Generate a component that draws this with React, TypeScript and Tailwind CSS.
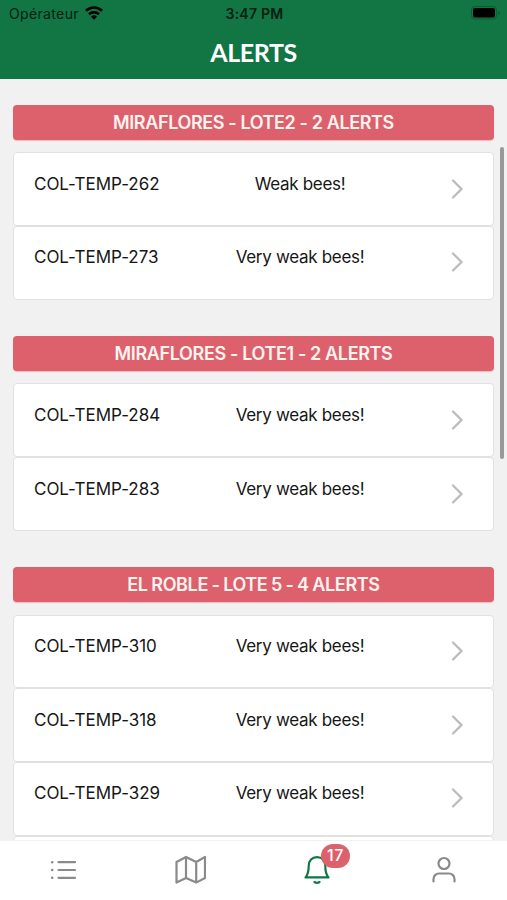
import React from 'react';

type Alert = {
  id: string;
  message: string;
};

type AlertGroup = {
  title: string;
  titleClass: string;
  alerts: Alert[];
  hasMore?: boolean;
};

const groups: AlertGroup[] = [
  {
    title: 'MIRAFLORES - LOTE2 - 2 ALERTS',
    titleClass: 'tracking-[-0.38px]',
    alerts: [
      { id: 'COL-TEMP-262', message: 'Weak bees!' },
      { id: 'COL-TEMP-273', message: 'Very weak bees!' },
    ],
  },
  {
    title: 'MIRAFLORES - LOTE1 - 2 ALERTS',
    titleClass: 'tracking-[-0.36px]',
    alerts: [
      { id: 'COL-TEMP-284', message: 'Very weak bees!' },
      { id: 'COL-TEMP-283', message: 'Very weak bees!' },
    ],
  },
  {
    title: 'EL ROBLE - LOTE 5 - 4 ALERTS',
    titleClass: 'tracking-[-0.36px] [word-spacing:-0.6px]',
    alerts: [
      { id: 'COL-TEMP-310', message: 'Very weak bees!' },
      { id: 'COL-TEMP-318', message: 'Very weak bees!' },
      { id: 'COL-TEMP-329', message: 'Very weak bees!' },
    ],
    hasMore: true,
  },
];

const StatusBar = () => (
  <div className="grid h-[27px] grid-cols-3 items-center pl-[9px] pr-[7px] text-[14px] text-[#04200f]">
    <div className="flex items-center gap-[6px]">
      <span className="tracking-[0.35px]">Opérateur</span>
      <svg className="-mt-px" width="18" height="14" viewBox="0 0 18 14" fill="none" stroke="#000" strokeWidth="2.6">
        <path d="M1 4.7a11.5 11.5 0 0 1 16 0" />
        <path d="M4 8.2a7.2 7.2 0 0 1 10 0" />
        <path d="M9 13.8 6 10.7a4.3 4.3 0 0 1 6 0z" fill="#000" stroke="none" />
      </svg>
    </div>
    <span className="text-center text-[14px] font-semibold tracking-[0.25px]">3:47 PM</span>
    <svg className="-mt-px justify-self-end" width="29" height="14" viewBox="0 0 29 14">
      <rect x="0.5" y="0.5" width="25" height="12.5" rx="3.5" fill="none" stroke="#0b5b34" />
      <rect x="2" y="2" width="22" height="9.5" rx="2" fill="#000" />
      <path d="M27.3 5v4c1-.5 1.3-1 1.3-2s-.3-1.5-1.3-2z" fill="#0b5b34" />
    </svg>
  </div>
);

const AlertRow = ({ alert }: { alert: Alert }) => (
  <div className="flex h-[73.7px] shrink-0 rounded-[4px] border border-[#e1e1e1] bg-white pl-[20px] pt-[19.4px] text-[17px] leading-[22px] text-[#161616]">
    <span className="w-[186px] tracking-[-0.03px]">{alert.id}</span>
    <span className="w-[160px] text-center tracking-[-0.3px]">{alert.message}</span>
    <svg className="ml-[71px] mt-[5px]" width="13" height="22" viewBox="0 0 13 22" fill="none" stroke="#bcbcbc" strokeWidth="2.3" strokeLinecap="round">
      <path d="M2 2.5 10.5 11 2 19.5" />
    </svg>
  </div>
);

const TabBar = () => (
  <nav className="grid h-[60px] shrink-0 grid-cols-4 border-t border-[#f1f1f1] bg-white text-[#8a8a8a]">
    <div className="flex justify-center pt-[14px]">
      <svg width="30" height="30" viewBox="0 0 30 30" fill="none" stroke="currentColor" strokeWidth="2.2" strokeLinecap="round">
        <path d="M10.500 7.2h16.500M10.500 15h16.500M10.500 22.8h16.500" />
        <path d="M4.200 7.2h.01M4.200 15h.01M4.200 22.8h.01" strokeWidth="2.6" />
      </svg>
    </div>
    <div className="flex justify-center pt-[13px]">
      <svg width="32" height="32" viewBox="0 0 32 32" fill="none" stroke="currentColor" strokeWidth="2.2" strokeLinejoin="round">
        <path d="M2.5 8 12 3v21L2.500 28.600zM12 3l10.200 5v20.600l-10.200-4.600M22.200 8 31 3v21l-8.800 4.600" />
      </svg>
    </div>
    <div className="flex justify-center pt-[13px]">
      <div className="relative">
        <svg width="30" height="32" viewBox="0 0 30 32" fill="none" stroke="#117644" strokeWidth="2.2" strokeLinejoin="round">
          <path d="M3.5 23.4h23c-2.5-2.6-3.2-5.500-3.2-11.3C23.300 6.500 20 3.200 15 3.200s-8.300 3.300-8.300 8.900c0 5.800-.7 8.700-3.200 11.300z" />
          <path d="M12 27.300c.6 1.100 1.600 1.600 3 1.600s2.400-.5 3-1.600" strokeWidth="2.400" />
        </svg>
        <span className="absolute left-[19px] top-[-10px] flex h-[24px] w-[29px] items-center justify-center rounded-full bg-[#dc616d] pb-[2px] text-[16px] font-medium tracking-[0.5px] text-white">
          17
        </span>
      </div>
    </div>
    <div className="flex justify-center pt-[14px]">
      <svg width="30" height="30" viewBox="0 0 30 30" fill="none" stroke="currentColor" strokeWidth="2.2" strokeLinecap="round">
        <circle cx="15" cy="8.500" r="5.500" />
        <path d="M4.500 26.500v-2.500a5.500 5.500 0 0 1 5.500-5.500h10a5.500 5.500 0 0 1 5.500 5.500v2.500" />
      </svg>
    </div>
  </nav>
);

const App = () => {
  return (
    <div className="flex h-[900px] w-[507px] flex-col overflow-hidden bg-[#f1f1f1] font-['Inter',sans-serif]">
      <header className="h-[79px] shrink-0 bg-[#117644]">
        <StatusBar />
        <h1 className="text-center font-['Lato',sans-serif] text-[25px] font-bold leading-[51px] tracking-[-0.4px] text-white">ALERTS</h1>
      </header>

      <main className="relative min-h-0 flex-1 overflow-hidden px-[13px] pt-[26px]">
        {groups.map((group) => (
          <section key={group.title} className="mb-[36.5px]">
            <h2 className="h-[35px] rounded-[4px] bg-[#dc616d] text-center text-[18px] font-semibold leading-[36px] text-[#fff3ef] shadow-[0_1px_1px_#f0b9bd]">
              <span className={group.titleClass}>{group.title}</span>
            </h2>
            <div className="mt-[12.3px] flex flex-col">
              {group.alerts.map((alert) => (
                <AlertRow key={alert.id} alert={alert} />
              ))}
              {/* next row, still behind the tab bar */}
              {group.hasMore && <div className="h-[73.7px] rounded-[4px] border border-[#e1e1e1] bg-white" />}
            </div>
          </section>
        ))}
        {/* scroll indicator */}
        <div className="absolute right-[3px] top-[68px] h-[312px] w-[4px] rounded-full bg-[#999]" />
      </main>

      <TabBar />
    </div>
  );
};

export default App;
